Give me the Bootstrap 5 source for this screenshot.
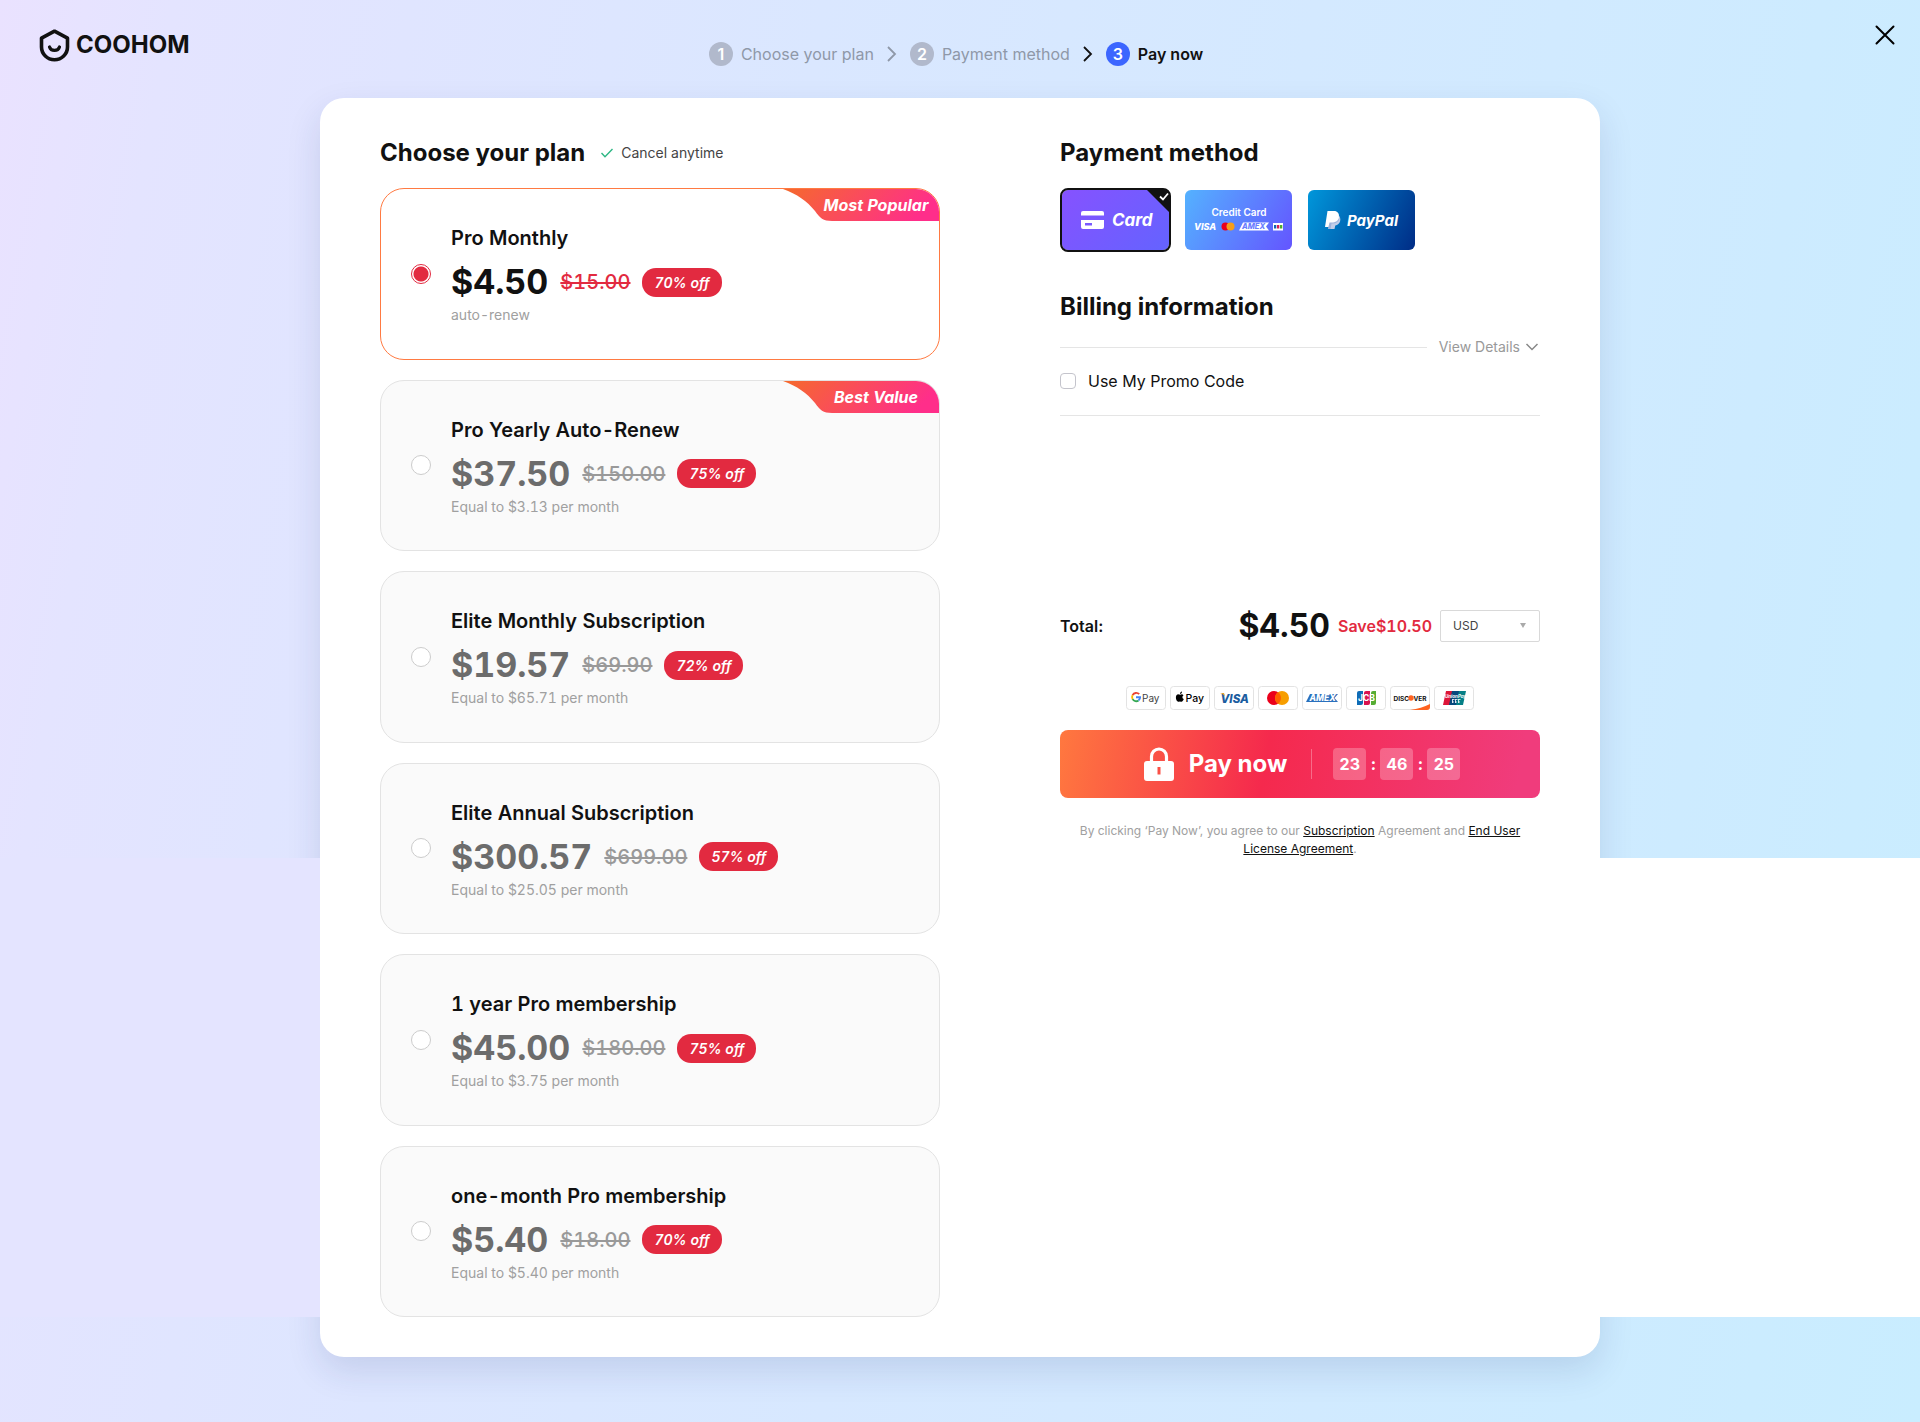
<!DOCTYPE html>
<html lang="en">
<head>
<meta charset="utf-8">
<meta name="viewport" content="width=device-width, initial-scale=1">
<title>Coohom - Pay now</title>
<link href="https://cdn.jsdelivr.net/npm/bootstrap@5.3.0/dist/css/bootstrap.min.css" rel="stylesheet">
<style>
  body {
    font-family: Inter, "Liberation Sans", sans-serif;
    color: #111;
    min-height: 100vh;
    overflow-x: hidden;
    background: linear-gradient(100deg, #eae2ff 0%, #e4e4ff 8%, #e0e5ff 19%, #dae7ff 38%, #d1eaff 72%, #cdebff 84%, #c9edff 100%);
  }
  .page-clip { overflow: hidden; padding-bottom: 65px; }
  .top-bar { display: grid; grid-template-columns: 1fr auto 1fr; align-items: start; height: 98px; padding: 0 24px 0 16px; }
  .brand { margin: 28px 0 0 23px; gap: 6px; color: #111; text-decoration: none; font-size: 24px; line-height: 34px; font-weight: 700; }
  .steps { margin: 42px 0 0; line-height: 24px; font-size: 16px; color: #8f98a8; }
  .steps li { gap: 8px; }
  .step-num { width: 24px; height: 24px; border-radius: 50%; background: #b1b9cc; color: #fff; font-weight: 600; text-align: center; }
  .steps .current { color: #111; font-weight: 600; }
  .current .step-num { background: #3c66ff; }
  .chev { display: block; width: 36px; height: 24px; }
  .close-btn { margin-top: 24px; width: 22px; height: 22px; line-height: 0; }

  .sheet { position: relative; max-width: 1280px; border-radius: 24px; background: #fff; padding: 40px 60px; box-shadow: 0 14px 34px rgba(30, 50, 110, .13); }
  .sheet::before, .sheet::after { content: ""; position: absolute; top: 760px; bottom: 40px; width: 100vw; }
  .sheet::before { right: 100%; background: #e4e4ff; }
  .sheet::after { left: 100%; background: #fff; }
  .plans-col { width: 560px; }
  .pay-col { width: 480px; }
  .sec-title { font-size: 24px; line-height: 30px; font-weight: 700; margin: 0; }
  .note { font-size: 14px; line-height: 20px; color: #444; }

  .plan-list { display: grid; grid-auto-rows: 1fr; gap: 20px; margin-top: 20px; min-height: 1129px; font-variant-numeric: tabular-nums; }
  .plan { position: relative; overflow: hidden; border: 1px solid #e3e3e3; border-radius: 24px; background: #fafafa; padding: 0 30px; gap: 20px; cursor: pointer; }
  .plan-radio { appearance: none; flex: none; width: 20px; height: 20px; margin: 0; border: 1px solid #ccc; border-radius: 50%; background: #fff; }
  .plan-radio:checked { border-color: #e22a40; background: radial-gradient(circle, #e22a40 7px, #fff 8px); }
  .plan-text { padding-top: 2px; }
  .plan-name { font-size: 20px; line-height: 28px; font-weight: 600; }
  .price-row { gap: 12px; height: 44px; margin: 8px 0 1px; }
  .price { font-size: 34px; line-height: 44px; font-weight: 700; color: #6c6c6c; }
  .old { font-size: 20px; line-height: 28px; font-weight: 500; color: #999; }
  .off { font-size: 14px; line-height: 29px; font-weight: 600; font-style: italic; color: #fff; background: #e22a40; border-radius: 14px; padding: 0 12px; }
  .sub { font-size: 14px; line-height: 20px; color: #a0a0a0; }
  .plan.picked { background: #fff; border-color: #ff7a42; }
  .picked .price { color: #111; }
  .picked .old { color: #e22a40; }
  .ribbon { position: absolute; top: 0; right: 0; width: 156px; height: 32px; padding-left: 30px; text-align: center; color: #fff; font-size: 16px; line-height: 32px; font-weight: 700; font-style: italic; }
  .ribbon svg { position: absolute; inset: 0; z-index: 0; }
  .ribbon span { position: relative; }

  .methods { gap: 12px; margin-top: 20px; }
  .method { position: relative; width: 111px; height: 64px; padding: 0; border: 2px solid transparent; border-radius: 8px; background-clip: padding-box; color: #fff; line-height: 0; }
  .m-card { border-color: #111; background-image: linear-gradient(135deg, #8652ff, #6463ff); }
  .m-credit { background-image: linear-gradient(120deg, #54b2ff, #6455ff); }
  .m-paypal { background-image: linear-gradient(115deg, #0097db, #002c86); }
  .billing { margin-top: 40px; }
  .details-row { margin-top: 15px; }
  .rule { height: 1px; background: #e5e5e5; }
  .details { border: 0; background: none; padding: 0; margin-left: 12px; color: #999; font-size: 14px; line-height: 20px; gap: 5px; }
  .promo { gap: 12px; margin: 12px 0 22px; font-size: 16px; line-height: 24px; }
  .promo input { appearance: none; width: 16px; height: 16px; margin: 0; border: 1px solid #c4c4cc; border-radius: 4px; background: #fff; }
  .total-row { margin-top: 190px; height: 40px; font-size: 16px; font-weight: 600; }
  .total-price { font-size: 32px; line-height: 40px; font-weight: 700; font-variant-numeric: tabular-nums; }
  .save { color: #e22a40; font-variant-numeric: tabular-nums; }
  .currency { width: 100px; height: 32px; appearance: none; border: 1px solid #d9d9d9; border-radius: 2px; background: #fff; color: #444; font-size: 12px; font-weight: 400; padding: 0 12px; }
  .caret { position: absolute; right: 14px; top: 13px; }
  .brands { gap: 4px; margin-top: 40px; }
  .brands svg { display: block; width: 40px; height: 24px; }
  .pay-btn { width: 100%; height: 68px; margin-top: 20px; padding: 0 4px 0 8px; border: 0; border-radius: 8px; color: #fff; background: linear-gradient(100deg, #ff783f 0%, #f5294d 43%, #f03c7c 95%); }
  .pay-label { font-size: 24px; line-height: 32px; font-weight: 700; margin-left: 15px; }
  .split { width: 1px; height: 30px; background: rgba(255, 255, 255, .3); margin: 0 21px 0 24px; }
  .timer { font-size: 16px; line-height: 32px; font-weight: 700; }
  .digit { width: 33px; border-radius: 4px; background: rgba(255, 255, 255, .25); }
  .colon { width: 14px; }
  .terms { margin: 24px 0 0; padding: 0 16px; font-size: 12px; line-height: 18px; color: #a0a0a0; text-align: center; }
  .terms a { color: #111; }
</style>
</head>
<body>
<div class="page-clip">
  <header class="top-bar">
    <a class="brand d-flex align-items-center" href="#" aria-label="Coohom">
      <svg width="31" height="33" viewBox="0 0 31 33" fill="none" stroke="#111" stroke-width="3.600" aria-hidden="true"><path d="M15.500 2.200 28.500 9.200V18a13 12.700 0 0 1-26 0V9.200Z" stroke-linejoin="round"/><path d="M10.500 18c1.500 4.600 8.500 4.600 10 0" stroke-linecap="round" stroke-width="3.200"/></svg>
      <span>COOHOM</span>
    </a>
    <ol class="steps list-unstyled d-flex">
      <li class="d-flex"><span class="step-num">1</span>Choose your plan</li>
      <li aria-hidden="true"><svg class="chev" viewBox="0 0 36 24" fill="none" stroke="#8f98a8" stroke-width="1.800"><path d="m14 5 7 7-7 7"/></svg></li>
      <li class="d-flex"><span class="step-num">2</span>Payment method</li>
      <li aria-hidden="true"><svg class="chev" viewBox="0 0 36 24" fill="none" stroke="#111" stroke-width="1.800"><path d="m14 5 7 7-7 7"/></svg></li>
      <li class="d-flex current" aria-current="step"><span class="step-num">3</span>Pay now</li>
    </ol>
    <button class="close-btn btn p-0 border-0 ms-auto" type="button" aria-label="Close"><svg width="22" height="22" viewBox="0 0 22 22" stroke="#000" stroke-width="2" stroke-linecap="round"><path d="m2.500 2.500 17 17m0-17-17 17"/></svg></button>
  </header>

  <main class="sheet mx-auto d-flex justify-content-between">
    <section class="plans-col">
      <div class="d-flex align-items-center">
        <h1 class="sec-title">Choose your plan</h1>
        <svg class="ms-3 me-2" width="12" height="10" viewBox="0 0 12 10" fill="none" stroke="#2db784" stroke-width="1.400" aria-hidden="true"><path d="m.5 5 3.500 3.700L11.500 1"/></svg>
        <span class="note">Cancel anytime</span>
      </div>
      <div class="plan-list">
        <label class="plan picked d-flex align-items-center">
          <input class="plan-radio" type="radio" name="plan" checked>
          <span class="plan-text d-flex flex-column">
            <span class="plan-name">Pro Monthly</span>
            <span class="price-row d-flex align-items-center"><span class="price">$4.50</span><s class="old">$15.00</s><span class="off">70% off</span></span>
            <span class="sub">auto-renew</span>
          </span>
          <span class="ribbon"><svg width="156" height="32" viewBox="0 0 156 32" aria-hidden="true"><defs><linearGradient id="rib" x1="0" y1="0" x2="1" y2=".2"><stop offset="0" stop-color="#f56a2c"/><stop offset="1" stop-color="#ff2e8a"/></linearGradient></defs><path fill="url(#rib)" d="M0 0C14 5 24 12 32 22c5 7 8 10 17 10h107V0Z"/></svg><span>Most Popular</span></span>
        </label>
        <label class="plan d-flex align-items-center">
          <input class="plan-radio" type="radio" name="plan">
          <span class="plan-text d-flex flex-column">
            <span class="plan-name">Pro Yearly Auto-Renew</span>
            <span class="price-row d-flex align-items-center"><span class="price">$37.50</span><s class="old">$150.00</s><span class="off">75% off</span></span>
            <span class="sub">Equal to $3.13 per month</span>
          </span>
          <span class="ribbon"><svg width="156" height="32" viewBox="0 0 156 32" aria-hidden="true"><path fill="url(#rib)" d="M0 0C14 5 24 12 32 22c5 7 8 10 17 10h107V0Z"/></svg><span>Best Value</span></span>
        </label>
        <label class="plan d-flex align-items-center">
          <input class="plan-radio" type="radio" name="plan">
          <span class="plan-text d-flex flex-column">
            <span class="plan-name">Elite Monthly Subscription</span>
            <span class="price-row d-flex align-items-center"><span class="price">$19.57</span><s class="old">$69.90</s><span class="off">72% off</span></span>
            <span class="sub">Equal to $65.71 per month</span>
          </span>
        </label>
        <label class="plan d-flex align-items-center">
          <input class="plan-radio" type="radio" name="plan">
          <span class="plan-text d-flex flex-column">
            <span class="plan-name">Elite Annual Subscription</span>
            <span class="price-row d-flex align-items-center"><span class="price">$300.57</span><s class="old">$699.00</s><span class="off">57% off</span></span>
            <span class="sub">Equal to $25.05 per month</span>
          </span>
        </label>
        <label class="plan d-flex align-items-center">
          <input class="plan-radio" type="radio" name="plan">
          <span class="plan-text d-flex flex-column">
            <span class="plan-name">1 year Pro membership</span>
            <span class="price-row d-flex align-items-center"><span class="price">$45.00</span><s class="old">$180.00</s><span class="off">75% off</span></span>
            <span class="sub">Equal to $3.75 per month</span>
          </span>
        </label>
        <label class="plan d-flex align-items-center">
          <input class="plan-radio" type="radio" name="plan">
          <span class="plan-text d-flex flex-column">
            <span class="plan-name">one-month Pro membership</span>
            <span class="price-row d-flex align-items-center"><span class="price">$5.40</span><s class="old">$18.00</s><span class="off">70% off</span></span>
            <span class="sub">Equal to $5.40 per month</span>
          </span>
        </label>
      </div>
    </section>

    <section class="pay-col">
      <h2 class="sec-title">Payment method</h2>
      <div class="methods d-flex">
        <button class="method m-card" type="button" aria-pressed="true">
          <svg width="107" height="60" viewBox="0 0 107 60" font-family="Inter, sans-serif" fill="#fff">
            <path d="M85 0h18a4 4 0 0 1 4 4v18Z" fill="#111"/><path d="m98 6.500 3 3 5-6" fill="none" stroke="#fff" stroke-width="1.800"/>
            <path d="M21 21h19a2 2 0 0 1 2 2v2.500H19V23a2 2 0 0 1 2-2Z"/><path fill-rule="evenodd" d="M19 30h23v7a2 2 0 0 1-2 2H21a2 2 0 0 1-2-2Zm4 3v2.500h7V33Z"/>
            <text x="50" y="36" font-size="17" font-weight="700" font-style="italic">Card</text>
          </svg>
        </button>
        <button class="method m-credit" type="button">
          <svg width="107" height="60" viewBox="0 0 107 60" font-family="Inter, sans-serif" fill="#fff">
            <text x="54" y="26" font-size="10" font-weight="600" text-anchor="middle">Credit Card</text>
            <text x="9" y="40" font-size="9" font-weight="800" font-style="italic">VISA</text>
            <circle cx="40.500" cy="36.500" r="4" fill="#eb001b"/><circle cx="45.500" cy="36.500" r="4" fill="#f79e1b"/>
            <path d="M58 32.500h26l-3 4 3 4H54Z" fill="#fff"/><text x="57" y="39.200" font-size="7.500" font-weight="800" font-style="italic" fill="#6a7dff">AMEX</text>
            <rect x="88" y="33" width="10" height="7.500" fill="#fff"/><rect x="89" y="35" width="2.300" height="3.500" fill="#1265b0"/><rect x="92" y="35" width="2.300" height="3.500" fill="#d81e50"/><rect x="95" y="35" width="2.300" height="3.500" fill="#4fab30"/>
          </svg>
        </button>
        <button class="method m-paypal" type="button">
          <svg width="107" height="60" viewBox="0 0 107 60" font-family="Inter, sans-serif" fill="#fff">
            <path d="M22 24h6c5 0 5 9-1.500 10h-2L23.500 39H20Z" fill="#9fb3dc"/>
            <path d="M19.500 21H26c7 0 7 11-1 11.500h-3.500L20.500 37H17Z"/><path d="M30 25c3 4 0 8.500-5 8.500h-1.500L22.500 39h4l.8-3.500c5-.5 7-7.500 2.700-10.500Z" fill="#c3cee8"/>
            <text x="39" y="36" font-size="15" font-weight="700" font-style="italic">PayPal</text>
          </svg>
        </button>
      </div>

      <h2 class="sec-title billing">Billing information</h2>
      <div class="details-row d-flex align-items-center">
        <div class="rule flex-grow-1"></div>
        <button class="details d-flex align-items-center" type="button">View Details <svg width="15" height="10" viewBox="0 0 15 10" fill="none" stroke="#888" stroke-width="1.500" aria-hidden="true"><path d="m1.500 2 5.500 5.500L12.500 2"/></svg></button>
      </div>
      <div class="promo d-flex align-items-center"><input id="promo" type="checkbox"><label for="promo">Use My Promo Code</label></div>
      <div class="rule"></div>

      <div class="total-row d-flex align-items-center gap-2">
        <span class="me-auto">Total:</span>
        <span class="total-price">$4.50</span>
        <span class="save">Save$10.50</span>
        <div class="position-relative d-flex">
          <select class="currency" aria-label="Currency"><option>USD</option></select>
          <svg class="caret" width="6" height="5" viewBox="0 0 6 5" fill="#aaa" aria-hidden="true"><path d="M0 0h6L3 5Z"/></svg>
        </div>
      </div>

      <div class="brands d-flex justify-content-center">
        <svg viewBox="0 0 40 24" font-family="Inter, sans-serif"><rect x=".5" y=".5" width="39" height="23" rx="3" fill="#fff" stroke="#e3e3e3"/><g fill="none" stroke-width="1.900"><path d="M13.200 8.200A4.100 4.100 0 0 0 6.600 9.100" stroke="#ea4335"/><path d="M6.600 9.100a4.100 4.100 0 0 0 0 4" stroke="#fbbc04"/><path d="M6.600 13.100a4.100 4.100 0 0 0 5.900 1.400" stroke="#34a853"/><path d="M12.500 14.500a4 4 0 0 0 1.600-3.200H10" stroke="#4285f4"/></g><text x="16" y="15.500" font-size="10" fill="#444">Pay</text></svg>
        <svg viewBox="0 0 40 24" font-family="Inter, sans-serif"><rect x=".5" y=".5" width="39" height="23" rx="3" fill="#fff" stroke="#e3e3e3"/><path d="M10.200 8.700c1-.8 2.600-.7 3.300.5-1.700 1-1.300 3.200.3 3.900-.5 1.400-1.400 2.700-2.400 2.600-.7-.1-1-.4-1.600-.3-.7.100-1 .4-1.600.3C5.700 15.300 4.700 8.800 8 8.300c.9 0 1.500.4 2.200.4ZM10 8c0-1.200.9-2.200 2-2.400C12.100 6.900 11.200 8 10 8Z"/><text x="15.500" y="15.500" font-size="10.500" font-weight="500">Pay</text></svg>
        <svg viewBox="0 0 40 24" font-family="Inter, sans-serif"><rect x=".5" y=".5" width="39" height="23" rx="3" fill="#fff" stroke="#e3e3e3"/><text x="6.500" y="16.500" font-size="11.500" font-weight="800" font-style="italic" fill="#1b5d9f">VISA</text><path d="M6 7h4l1 3.500C9.500 8.500 8 7.500 6 7Z" fill="#e6a12c"/></svg>
        <svg viewBox="0 0 40 24"><rect x=".5" y=".5" width="39" height="23" rx="3" fill="#fff" stroke="#e3e3e3"/><circle cx="16" cy="12" r="7" fill="#eb001b"/><circle cx="24" cy="12" r="7" fill="#f79e00"/><path d="M20 6.300a7 7 0 0 1 0 11.400 7 7 0 0 1 0-11.400Z" fill="#ff5f00"/></svg>
        <svg viewBox="0 0 40 24" font-family="Inter, sans-serif"><rect x=".5" y=".5" width="39" height="23" rx="3" fill="#fff" stroke="#e3e3e3"/><path d="M8 8h28l-3.500 4 3.500 4H4Z" fill="#2a70bd"/><text x="7.500" y="15" font-size="8.500" font-weight="800" font-style="italic" fill="#fff">AMEX</text></svg>
        <svg viewBox="0 0 40 24" font-family="Inter, sans-serif"><rect x=".5" y=".5" width="39" height="23" rx="3" fill="#fff" stroke="#e3e3e3"/><path d="M13 5h4v12a2 2 0 0 1-2 2h-4V7a2 2 0 0 1 2-2Z" fill="#0f6cb6"/><path d="M20 5h4v12a2 2 0 0 1-2 2h-4V7a2 2 0 0 1 2-2Z" fill="#d8124f"/><path d="M27 5h3v12a2 2 0 0 1-2 2h-3V7a2 2 0 0 1 2-2Z" fill="#56ad34"/><text x="20.500" y="15" font-size="8.500" font-weight="700" fill="#fff" text-anchor="middle">JCB</text></svg>
        <svg viewBox="0 0 40 24" font-family="Inter, sans-serif"><rect x=".5" y=".5" width="39" height="23" rx="3" fill="#fff" stroke="#e3e3e3"/><path d="M20 24C28 23 34 21 40 18v3a3 3 0 0 1-3 3Z" fill="#ff6320"/><text x="3.500" y="14.500" font-size="6.500" font-weight="700" fill="#111">DISC</text><circle cx="21" cy="12" r="2.700" fill="#ff6320"/><text x="23.500" y="14.500" font-size="6.500" font-weight="700" fill="#111">VER</text></svg>
        <svg viewBox="0 0 40 24" font-family="Inter, sans-serif"><rect x=".5" y=".5" width="39" height="23" rx="3" fill="#fff" stroke="#e3e3e3"/><path d="M12 5h7l-3 14H9Z" fill="#dd1538"/><path d="M18 5h8l-3 14h-8Z" fill="#07487c"/><path d="M25 5h7l-3 14h-7Z" fill="#057f86"/><text x="11" y="11.500" font-size="4.500" font-weight="700" font-style="italic" fill="#fff">UnionPay</text><path d="M18.500 13.500h2m1 0h2m1 0h2m-8.500 2.500h2m1 0h2m1 0h2m-7.500-3v4m3-4v4m3-4v4" stroke="#fff" stroke-width=".8"/></svg>
      </div>

      <button class="pay-btn d-flex align-items-center justify-content-center" type="button">
        <svg width="30" height="34" viewBox="0 0 30 34" aria-hidden="true"><path d="M7.500 16V9.500a7.500 7.500 0 0 1 15 0V16" fill="none" stroke="#fff" stroke-width="3.200"/><path fill="#fff" fill-rule="evenodd" d="M3 14h24a3 3 0 0 1 3 3v14a3 3 0 0 1-3 3H3a3 3 0 0 1-3-3V17a3 3 0 0 1 3-3Zm10.500 6v7.500h3V20Z"/></svg>
        <span class="pay-label">Pay now</span>
        <span class="split"></span>
        <span class="timer d-flex"><span class="digit">23</span><span class="colon">:</span><span class="digit">46</span><span class="colon">:</span><span class="digit">25</span></span>
      </button>
      <p class="terms">By clicking ‘Pay Now’, you agree to our <a href="#">Subscription</a> Agreement and <a href="#">End User License Agreement</a>.</p>
    </section>
  </main>
</div>
<script src="https://cdn.jsdelivr.net/npm/bootstrap@5.3.0/dist/js/bootstrap.bundle.min.js"></script>
</body>
</html>
